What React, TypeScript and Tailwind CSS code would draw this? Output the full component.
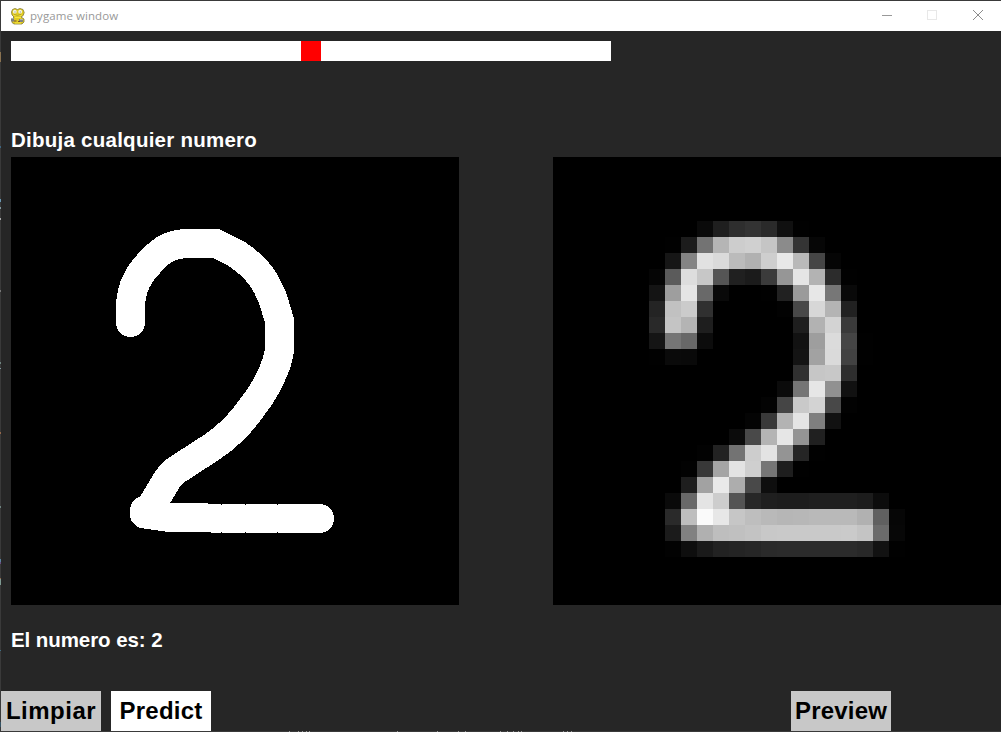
const START_ROW = 4;

// Each row: first column, then brightness of consecutive cells as hex pairs.
const ROWS: [number, string][] = [
  [9, '0a1f2e332a1001'],
  [7, '011c73b5cdd0c58b3406'],
  [7, '1684e1dabbb1cee8b94505'],
  [6, '055bddc755201b3b96e5b32c01'],
  [6, '149ee56909000001219be77709'],
  [6, '24c1cb30000000000248d7b421'],
  [6, '29c4b41e00000000001eb2d33a'],
  [6, '1575680c0000000000129edb4501'],
  [6, '010a0900000000000014a2da4201'],
  [15, '30c6c82e'],
  [14, '0b75e69111'],
  [13, '0345c9d34802'],
  [12, '0439b3e47f11'],
  [11, '0b49b4e69420'],
  [9, '022273cde3942501'],
  [8, '0238a5e3cf761e01'],
  [8, '1ea2e9ad490e'],
  [7, '0a69e4cd54271f1d1d1f1f1f1c0c'],
  [7, '2abefae7c6beb9b6b7b9b9b9b16006'],
  [7, '1b81b0bec0c3c8c9c9c9c9cac46b07'],
  [7, '020e1a2224262a2b2b2b2b2b281201'],
];

// Slivers of the desktop seen along the left and bottom edges: position, length, colour.
const LEFT_MARKS: [number, number, string][] = [
  [52, 10, '#8a7250'], [146, 2, '#3f6680'], [199, 3, '#6a98b4'], [207, 2, '#83989f'],
  [218, 2, '#aaaaaa'], [290, 2, '#777777'], [362, 2, '#6f8480'], [368, 1, '#83989f'],
  [432, 2, '#94684b'], [506, 2, '#6f8480'], [559, 3, '#5b83a0'], [562, 2, '#694e80'],
  [578, 1, '#94684b'], [579, 6, '#7e9a92'], [650, 1, '#3f7088'], [722, 5, '#355365'],
];
const BOTTOM_MARKS = [289, 298, 302, 306, 309, 397, 437, 458, 465, 500, 507, 513, 518, 521, 563, 567, 571];

function Snake() {
  return (
    <svg className="h-[17px] w-[15px] shrink-0" viewBox="0 0 15 17">
      <path d="M2.500 1.500 5 .5l2.500 1 2.500-1 3 1 1.200 3-1 3L11 9l3 2v3l-2 2H4l-2-1.500V11l2-2-2-2-.5-3z" fill="#e0cb22" stroke="#857b35" strokeWidth=".8" />
      <path d="M3.500 7.500h8M5 9.500h6M5 15h6" stroke="#f6e645" />
      <circle cx="4.800" cy="3.700" r="1.900" fill="#f3f3e6" />
      <circle cx="10.200" cy="3.700" r="1.900" fill="#f3f3e6" />
      <path d="M4.500 4h1M9.800 4h1" stroke="#89877a" />
      <path d="M4 6.500q3.500 2 7 0" fill="none" stroke="#9d8c23" strokeWidth=".7" />
      <path d="M1 10h3v3.500H1zM9 11h4v3H9z" fill="#808282" />
      <path d="M1 10.500h2.500M10 11.500h3" stroke="#b1b4ad" />
      <path d="M4 13h2.500M8 13.500h2" stroke="#75512b" />
    </svg>
  );
}

function TitleBar() {
  return (
    <header className="flex h-[30px] shrink-0 items-center bg-white pl-[9px] font-normal">
      <Snake />
      <span className="ml-[5px] font-['Open_Sans','Noto_Sans',sans-serif] text-[11.500px] leading-4 tracking-[0.07px] text-[#999]">pygame window</span>
      <svg className="ml-auto h-[30px] w-[138px]" viewBox="0 0 138 30" fill="none" shapeRendering="crispEdges">
        <path d="M19 14.500h10" stroke="#999" />
        <path d="M64.500 9.500h9v9h-9z" stroke="#e8e8e8" />
        <path d="m110 9 10 10m0-10-10 10" stroke="#8c8c8c" shapeRendering="auto" />
      </svg>
    </header>
  );
}

function DrawingCanvas() {
  return (
    <svg className="size-[448px] bg-black" viewBox="11 157 448 448" fill="none" stroke="#fff" strokeWidth="29" strokeLinecap="round" strokeLinejoin="round" shapeRendering="crispEdges">
      <path d="M130.500 322.500V306Q131 292 136.500 281Q142 270 151 261.500Q159 252 169 247Q177 244 187 243.500H216L236 253.500Q246 260 254 268Q262 276 267.500 287Q273 297 276 309L279.500 321V350Q278 361 273 372Q265 391 253 406Q244 419 234 429Q224 439 212 447L175 471Q170 475 167 480L152 505 144.500 514V510.500V514L170 517.500 208 518 319.500 518.500" />
      <path d="M221 504.500h1m23 0h1m31 0h1M221 532.500h1m23 0h1m31 0h1" stroke="#000" strokeWidth="1" strokeLinecap="butt" />
    </svg>
  );
}

function PixelPreview() {
  return (
    <svg className="size-[448px] bg-black" viewBox="0 0 28 28" shapeRendering="crispEdges">
      {ROWS.flatMap(([start, values], row) =>
        (values.match(/../g) ?? []).map((v, i) => (
          <rect key={`${row}-${i}`} x={start + i} y={START_ROW + row} width="1" height="1" fill={`#${v}${v}${v}`} />
        )),
      )}
    </svg>
  );
}

export default function App() {
  return (
    <div className="relative flex h-[732px] w-[1001px] overflow-hidden bg-[#3a3a3a] py-px pl-px font-['Liberation_Sans',Arial,sans-serif] font-bold">
      <div className="flex grow flex-col bg-[#262626]">
        <TitleBar />
        <div className="mt-[10px] ml-[10px] flex h-5 w-[600px] shrink-0 justify-center bg-white">
          <div className="h-5 w-5 bg-[#f00]" />
        </div>
        <h1 className="mt-[67px] ml-[10px] h-[29px] shrink-0 text-[20.500px] leading-6 tracking-[0.25px] whitespace-nowrap text-white">Dibuja cualquier numero</h1>
        <main className="flex shrink-0 justify-between pl-[10px]">
          <DrawingCanvas />
          <PixelPreview />
        </main>
        <p className="mt-[23px] ml-[10px] h-6 shrink-0 text-[20.500px] leading-6 tracking-[-0.08px] whitespace-nowrap text-white">El numero es: 2</p>
        <footer className="mt-auto flex h-10 shrink-0 text-[24px] leading-10 tracking-[0.2px] text-black">
          <button className="w-[100px] bg-[#c8c8c8] text-center tracking-[0.5px]">Limpiar</button>
          <button className="ml-[10px] w-[100px] bg-white text-center">Predict</button>
          <button className="mr-[110px] ml-auto w-[100px] bg-[#c8c8c8] text-center">Preview</button>
        </footer>
      </div>
      <svg className="pointer-events-none absolute top-0 left-0 h-[732px] w-[1001px]" viewBox="0 0 1001 732" shapeRendering="crispEdges">
        {LEFT_MARKS.map(([y, h, color]) => <rect key={y} y={y} width="1" height={h} fill={color} />)}
        {BOTTOM_MARKS.map((x) => <rect key={x} x={x} y="731" width="1" height="1" fill="#999" />)}
      </svg>
    </div>
  );
}
